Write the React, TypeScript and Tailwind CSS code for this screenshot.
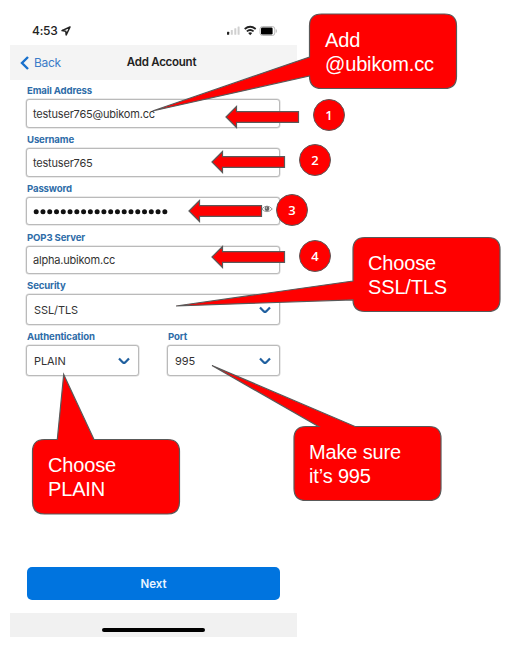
import type { ReactNode } from "react";

function Label({ children }: { children: ReactNode }) {
  return (
    <div className="whitespace-nowrap pl-px text-[9.6px] font-bold leading-[12px] tracking-[-0.14px] text-[#2e6ca8]">
      {children}
    </div>
  );
}

function Chevron() {
  return (
    <svg width="12" height="8" viewBox="0 0 12 8" fill="none" stroke="#20609f" strokeWidth="2.2">
      <path d="M1 1.4 L4.9 5.4 Q6 6.4 7.1 5.4 L11 1.4" strokeLinejoin="round" />
    </svg>
  );
}

const box = "flex items-center rounded-[3px] border border-[#bababa] shadow-[0_0_0_0.5px_#d5d5d5] bg-white text-[11px] text-[#333]";

function Field({ label, children }: { label: string; children: ReactNode }) {
  return (
    <div className="h-[48.75px]">
      <Label>{label}</Label>
      <div className={`${box} mt-[2px] h-[28.5px] pl-[6px] pr-[6px] pt-px tracking-[-0.2px]`}>{children}</div>
    </div>
  );
}

function Select({ label, value, width }: { label: string; value: string; width: string }) {
  return (
    <div className={`h-[51px] ${width}`}>
      <Label>{label}</Label>
      <div className={`${box} mt-[2px] h-[31px] justify-between pl-[7px] pr-[8px] pt-px tracking-[-0.1px]`}>
        <span>{value}</span>
        <Chevron />
      </div>
    </div>
  );
}

function Callout({ path, place, lines }: { path: string; place: string; lines: string[] }) {
  return (
    <>
      <svg className="absolute left-0 top-0" width="518" height="651">
        <path d={path} fill="#f00" stroke="#595959" strokeWidth="1.2" />
      </svg>
      <div className={`absolute whitespace-nowrap font-['Liberation_Sans',Arial,sans-serif] text-[20px] leading-[24px] tracking-[-0.15px] text-white ${place}`}>
        {lines.map((line) => (
          <div key={line}>{line}</div>
        ))}
      </div>
    </>
  );
}

function Step({ n, place, arrow }: { n: number; place: string; arrow: string }) {
  return (
    <>
      <svg className={`absolute ${arrow}`} width="75" height="24">
        <path d="M1 12 L11.5 1.5 V6.6 H73.5 V17.4 H11.5 V22.5 Z" fill="#f00" stroke="#595959" strokeWidth="1.2" />
      </svg>
      <div className={`absolute flex size-[32px] items-center justify-center rounded-full border border-[#595959] bg-[#f00] font-['Open_Sans',sans-serif] text-[13px] font-semibold leading-none text-white ${place}`}>
        {n}
      </div>
    </>
  );
}

export default function App() {
  return (
    <div className="relative h-[651px] w-[518px] overflow-hidden bg-white font-[Inter,sans-serif]">
      <div className="ml-[10px] flex h-[637px] w-[287px] flex-col">
        <div className="flex h-[45px] items-end justify-between pb-[6px] pl-[22px] pr-[19px]">
          <div className="flex items-center gap-[3px] text-[12px] font-medium leading-[16px] tracking-[-0.2px] text-[#222]">
            <span>4:53</span>
            <svg width="10" height="10" viewBox="0 0 10 10" fill="none" stroke="#222" strokeWidth="1.5" strokeLinejoin="round">
              <path d="M9 1 L1 4.6 L4.8 5.2 L5.2 9 Z" />
            </svg>
          </div>
          <svg width="52" height="16" viewBox="0 0 52 16">
            <rect x="1" y="8.7" width="2.2" height="3" rx=".5" fill="#222" />
            <rect x="4.8" y="7" width="2" height="4.7" rx=".5" fill="#d0d0d0" />
            <rect x="8.3" y="5.2" width="2" height="6.5" rx=".5" fill="#d0d0d0" />
            <rect x="11.6" y="3.4" width="2" height="8.3" rx=".5" fill="#d0d0d0" />
            <g fill="none" stroke="#222" strokeWidth="1.8">
              <path d="M18.7 6 Q24.2 1.5 29.7 6" />
              <path d="M20.8 8.4 Q24.2 5.7 27.6 8.4" />
            </g>
            <path d="M22.2 10 Q24.2 8.6 26.2 10 L24.2 12.2 Z" fill="#222" />
            <rect x="34" y="3.5" width="14.8" height="9" rx="2.5" fill="none" stroke="#bbb" strokeWidth="1" />
            <rect x="35" y="4.6" width="11.6" height="6.8" rx="1.2" fill="#000" />
            <path d="M50.3 6.5 V9.5" stroke="#bbb" />
          </svg>
        </div>

        <div className="grid h-[35px] shrink-0 grid-cols-[100px_1fr_84px] items-center bg-[#f4f4f4]">
          <div className="flex items-center gap-[5px] pl-[10px] text-[12px] tracking-[-0.3px] text-[#3a7bc8]">
            <svg width="9" height="14" viewBox="0 0 9 14" fill="none" stroke="#1870cc" strokeWidth="2.4">
              <path d="M8 1 L2 7 L8 13" />
            </svg>
            <span>Back</span>
          </div>
          <div className="whitespace-nowrap pt-px text-center text-[11.5px] font-semibold tracking-[-0.25px] text-[#222]">Add Account</div>
        </div>

        <div className="flex flex-col pl-[16px] pr-[17px] pt-[5.4px]">
          <Field label="Email Address"><span>testuser765@ubikom.cc</span></Field>
          <Field label="Username"><span>testuser765</span></Field>
          <Field label="Password">
            <svg width="136" height="8" viewBox="0 0 136 8" fill="#111">
              {Array.from({ length: 20 }, (_, i) => (
                <circle key={i} cx={3.2 + i * 6.77} cy="3.8" r="2.5" />
              ))}
            </svg>
            <svg className="mb-[5px] ml-auto" width="12" height="8" viewBox="0 0 12 8" fill="none" stroke="#999">
              <path d="M.7 4 Q6 -1.8 11.3 4 Q6 9.4 .7 4 Z" />
              <circle cx="6" cy="3.7" r="2.4" fill="#666" stroke="none" />
              <circle cx="5.3" cy="3" r=".7" fill="#ddd" stroke="none" />
            </svg>
          </Field>
          <Field label="POP3 Server"><span>alpha.ubikom.cc</span></Field>
          <Select label="Security" value="SSL/TLS" width="w-full" />
          <div className="flex justify-between">
            <Select label="Authentication" value="PLAIN" width="w-[113px]" />
            <Select label="Port" value="995" width="w-[113px]" />
          </div>
        </div>

        <button className="mx-[17px] mt-auto flex h-[33px] shrink-0 items-center justify-center rounded-[5px] bg-[#0074df] pt-[2px] text-[11.5px] font-semibold text-[#e9f4ff]">
          Next
        </button>
        <div className="mt-[13px] flex h-[24px] shrink-0 items-center justify-center bg-[#f1f1f1] pt-[9px]">
          <div className="h-[4px] w-[103px] rounded-full bg-black" />
        </div>
      </div>

      <Callout
        path="M309.5 57 V26 Q309.5 14 321.5 14 H444.5 Q456.5 14 456.5 26 V76.5 Q456.5 88.5 444.5 88.5 H321.5 Q309.5 88.5 309.5 76 L152.5 111 Z"
        place="left-[325px] top-[28px]"
        lines={["Add", "@ubikom.cc"]}
      />
      <Callout
        path="M353 281 V249.5 Q353 237.5 365 237.5 H488 Q500 237.5 500 249.5 V299.5 Q500 311.5 488 311.5 H365 Q353 311.5 353 299.8 L176 306 Z"
        place="left-[368px] top-[251px]"
        lines={["Choose", "SSL/TLS"]}
      />
      <Callout
        path="M57.3 439.5 L63.7 374.5 L94 439.5 H167.5 Q179.5 439.5 179.5 451.5 V502 Q179.5 514 167.5 514 H44.5 Q32.5 514 32.5 502 V451.5 Q32.5 439.5 44.5 439.5 Z"
        place="left-[48px] top-[453px]"
        lines={["Choose", "PLAIN"]}
      />
      <Callout
        path="M318.5 426.5 L212 365.5 L355 426.5 H429 Q441 426.5 441 438.5 V488.5 Q441 500.5 429 500.5 H306 Q294 500.5 294 488.5 V438.5 Q294 426.5 306 426.5 Z"
        place="left-[309px] top-[440px]"
        lines={["Make sure", "it’s 995"]}
      />

      <Step n={1} place="left-[313px] top-[99px]" arrow="left-[225px] top-[105px]" />
      <Step n={2} place="left-[299px] top-[144px]" arrow="left-[211px] top-[150px]" />
      <Step n={3} place="left-[276px] top-[194px]" arrow="left-[188px] top-[199px]" />
      <Step n={4} place="left-[299px] top-[240px]" arrow="left-[211px] top-[245px]" />
    </div>
  );
}
